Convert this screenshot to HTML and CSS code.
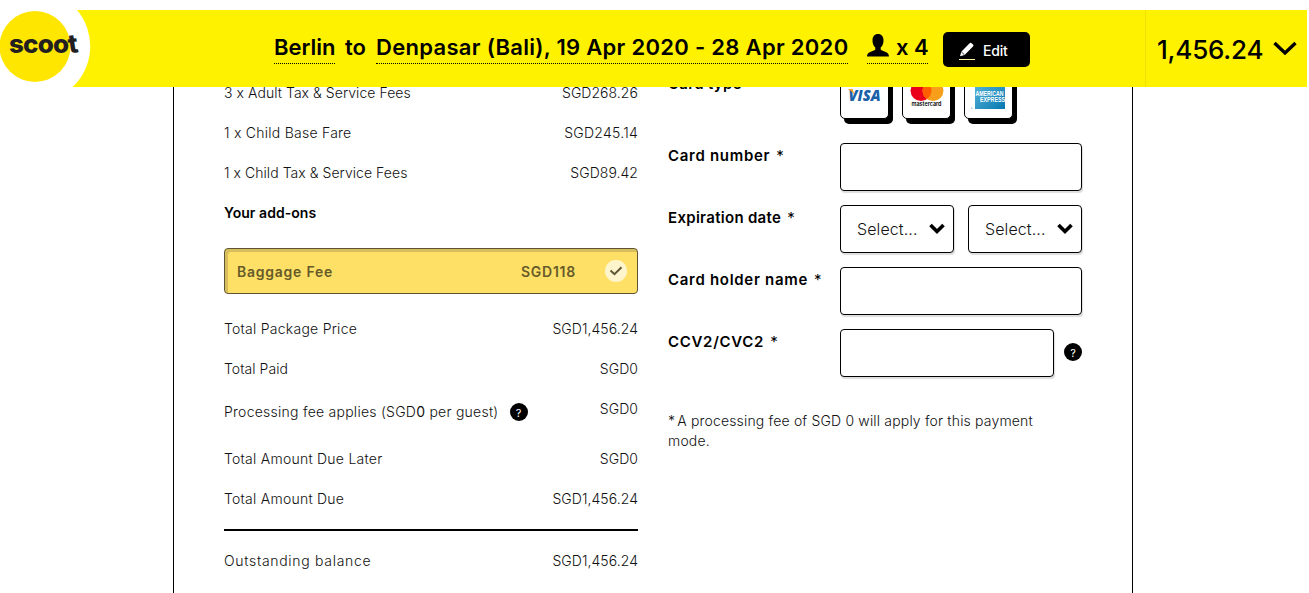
FILE: index.html
```html
<!DOCTYPE html>
<html lang="en">
<head>
  <meta charset="UTF-8">
  <meta name="viewport" content="width=device-width, initial-scale=1.0">
  <title>Scoot - Payment</title>
  <link rel="stylesheet" href="styles.css">
</head>
<body>
  <header class="topbar">
    <a class="logo" href="#">
      <svg width="92" height="77" viewBox="0 0 92 77">
        <path d="M0 0H77A56 56 0 0 1 72.500 77H0Z" fill="#fff"/>
        <circle cx="35" cy="36.500" r="35.500" fill="#ffe600"/>
      </svg>
      <span class="logo-text">scoo<i>t</i></span>
    </a>
    <div class="trip">
      <span class="trip-link from">Berlin</span>
      <span class="to">to</span>
      <span class="trip-link dest">Denpasar (Bali), 19 Apr 2020 - 28 Apr 2020</span>
      <span class="trip-link guests">
        <svg width="22" height="23" viewBox="0 0 22 23"><path d="M11 0C7.500 0 5.500 2.500 5.500 6.500C5.500 9.500 6.500 12 8.300 13.500V15.500C6.500 17.500 0 17.500 0 22.500H22C22 17.500 15.500 17.500 13.700 15.500V13.500C15.500 12 16.500 9.500 16.500 6.500C16.500 2.500 14.500 0 11 0Z"/></svg>
        x 4
      </span>
      <button class="edit">
        <svg width="16" height="18" viewBox="0 0 16 18">
          <path d="M1 14.200L2.300 9.800L10.600 1.200Q11.600 .2 12.600 1.200L14 2.600Q15 3.600 14 4.600L5.600 13L1 14.200Z" fill="#fff"/>
          <path d="M2.300 9.800L5.600 13" stroke="#000" stroke-width=".8"/>
          <path d="M0 17.500H16" stroke="#fff799"/>
        </svg>
        <span>Edit</span>
      </button>
    </div>
    <div class="total">
      <span>1,456.24</span>
      <svg width="24" height="16" viewBox="0 0 24 16"><path d="M1.500 2L12 12L22.500 2" fill="none" stroke="#000" stroke-width="3.400"/></svg>
    </div>
  </header>

  <main class="page">
    <section class="summary">
      <div class="row"><span>3 x Adult Tax &amp; Service Fees</span><span>SGD268.26</span></div>
      <div class="row"><span class="wide">1 x Child Base Fare</span><span class="wide">SGD245.14</span></div>
      <div class="row"><span>1 x Child Tax &amp; Service Fees</span><span>SGD89.42</span></div>
      <div class="row addons"><span>Your add-ons</span></div>
      <div class="baggage">
        <span class="name">Baggage Fee</span>
        <span class="price">SGD118</span>
        <svg width="22" height="22" viewBox="0 0 22 22"><circle cx="11" cy="11" r="11" fill="#fff5cc"/><path d="M5.500 10.500L9.500 14.200L16.500 7.300" fill="none" stroke="#5d5535" stroke-width="2"/></svg>
      </div>
      <div class="row"><span class="wide">Total Package Price</span><span>SGD1,456.24</span></div>
      <div class="row"><span>Total Paid</span><span>SGD0</span></div>
      <div class="row fee">
        <span class="fee-label wide">Processing fee applies (SGD<b>0</b> per guest)</span>
        <span class="help">?</span>
        <span class="amount">SGD0</span>
      </div>
      <div class="row"><span class="wide">Total Amount Due Later</span><span>SGD0</span></div>
      <div class="row"><span class="wide">Total Amount Due</span><span>SGD1,456.24</span></div>
      <div class="row balance"><span class="wider">Outstanding balance</span><span>SGD1,456.24</span></div>
    </section>

    <section class="payment">
      <div class="field types">
        <label>Card type</label>
        <div class="cards">
          <div class="card">
            <svg width="46" height="46" viewBox="0 0 46 46">
              <text x="23.500" y="28.500" class="visa" text-anchor="middle" textLength="32" lengthAdjust="spacingAndGlyphs">VISA</text>
              <path d="M6.500 17H11.500L13.500 23Q10 18 6.500 17Z" fill="#f2a01e"/>
            </svg>
          </div>
          <div class="card">
            <svg width="46" height="46" viewBox="0 0 46 46">
              <circle cx="18" cy="18.500" r="10.500" fill="#eb001b"/>
              <circle cx="30" cy="18.500" r="10.500" fill="#f79e1b"/>
              <path d="M24 9.900A10.500 10.500 0 0 1 24 27.100A10.500 10.500 0 0 1 24 9.900Z" fill="#ff5f00"/>
              <text x="23.500" y="34" class="mc" text-anchor="middle" textLength="30" lengthAdjust="spacingAndGlyphs">mastercard</text>
            </svg>
          </div>
          <div class="card">
            <svg width="46" height="46" viewBox="0 0 46 46">
              <defs><linearGradient id="amex" x1="0" x2="1" y1="0" y2="1"><stop offset="0" stop-color="#5cb8dc"/><stop offset="1" stop-color="#0878b0"/></linearGradient></defs>
              <rect x="10" y="7" width="30" height="30" fill="url(#amex)"/>
              <text x="10.500" y="23.500" class="ax" textLength="28" lengthAdjust="spacingAndGlyphs">AMERICAN</text>
              <text x="15" y="29.500" class="ax" textLength="25" lengthAdjust="spacingAndGlyphs">EXPRESS</text>
              <rect x="6" y="35.500" width="1.500" height="1.500" fill="#9ccbe0"/>
            </svg>
          </div>
        </div>
      </div>
      <div class="field">
        <label class="wider">Card number<i>*</i></label>
        <input class="input" type="text">
      </div>
      <div class="field">
        <label>Expiration date<i>*</i></label>
        <div class="selects">
          <div class="select"><span>Select...</span><svg width="16" height="12" viewBox="0 0 16 12"><path d="M1.500 2L8 8.500L14.500 2" fill="none" stroke="#000" stroke-width="3.600"/></svg></div>
          <div class="select"><span>Select...</span><svg width="16" height="12" viewBox="0 0 16 12"><path d="M1.500 2L8 8.500L14.500 2" fill="none" stroke="#000" stroke-width="3.600"/></svg></div>
        </div>
      </div>
      <div class="field">
        <label class="wider">Card holder name<i>*</i></label>
        <input class="input" type="text">
      </div>
      <div class="field">
        <label class="wider">CCV2/CVC2<i>*</i></label>
        <input class="input cvc" type="text">
        <span class="help">?</span>
      </div>
      <p class="note"><i>*</i>A processing fee of SGD 0 will apply for this payment<br>mode.</p>
    </section>
  </main>
</body>
</html>
```

FILE: styles.css
```css
* {
  box-sizing: border-box;
}
body {
  margin: 0;
  overflow: hidden;
  background: #fff;
  color: #111;
  font-family: "Inter", "Liberation Sans", sans-serif;
  font-size: 14px;
  font-weight: 300;
}
i {
  font-style: normal;
}

/* sticky trip bar */
.topbar {
  position: fixed;
  top: 10px;
  left: 0;
  width: 1307px;
  height: 77px;
  display: flex;
  justify-content: space-between;
  background: #fff200;
  color: #000;
  z-index: 2;
}
.logo {
  position: relative;
  width: 274px;
  color: #231f20;
  text-decoration: none;
}
.logo-text {
  position: absolute;
  left: 9px;
  top: 20px;
  font-family: "Inter", sans-serif;
  font-size: 26px;
  line-height: 28px;
  font-weight: 800;
  letter-spacing: -0.8px;
}
.logo-text i {
  display: inline-block;
  transform: rotate(-8deg);
}
.trip {
  flex: 1;
  display: flex;
  align-items: flex-start;
  padding-top: 22px;
  font-size: 22px;
  line-height: 31px;
  font-weight: 600;
}
.trip-link {
  height: 32px;
  border-bottom: 1px dotted #000;
  white-space: nowrap;
}
.from {
  width: 61px;
}
.to {
  width: 41px;
  padding-left: 10px;
}
.dest {
  width: 472px;
  margin-right: 19px;
  letter-spacing: 0.3px;
}
.guests {
  display: flex;
  gap: 7px;
  width: 61px;
}
.guests svg {
  margin-top: 2px;
  flex: none;
}
.edit {
  display: flex;
  align-items: center;
  gap: 8px;
  width: 87px;
  height: 35px;
  margin-left: 15px;
  padding: 2px 0 0 16px;
  border: 0;
  border-radius: 5px;
  background: #000;
  color: #fff;
  font: 500 14px "Inter", sans-serif;
  letter-spacing: -0.2px;
}
.total {
  display: flex;
  align-items: center;
  gap: 10px;
  width: 162px;
  padding: 1px 0 0 11px;
  border-left: 1px solid #eee000;
  font-size: 26px;
  font-weight: 500;
  letter-spacing: -0.2px;
}

/* two column body */
.page {
  display: flex;
  gap: 30px;
  width: 960px;
  height: 533px;
  margin: 60px 0 0 173px;
  padding: 13px 50px 0;
  border: solid #000;
  border-width: 0 1px;
}
.summary,
.payment {
  width: 414px;
}
.row {
  display: flex;
  justify-content: space-between;
  align-items: center;
  height: 40px;
  padding-bottom: 2px;
  letter-spacing: 0.05px;
}
.wide {
  letter-spacing: 0.25px;
}
.addons {
  font-weight: 600;
  color: #000;
}
.baggage {
  display: flex;
  align-items: center;
  height: 46px;
  margin: 15px 0;
  padding: 0 10px 0 12px;
  border: 1px solid #5d5535;
  border-radius: 4px;
  background: #ffe066;
  box-shadow: inset 3px 3px 0 #d6be5c;
  color: #665a29;
  font-weight: 600;
  letter-spacing: 0.75px;
}
.baggage .name {
  flex: 1;
}
.baggage .price {
  margin-right: 29px;
}
.fee {
  height: 50px;
  align-items: flex-start;
  line-height: 40px;
}
.fee-label {
  margin-top: 3px;
}
.fee .amount {
  margin-left: auto;
}
.help {
  width: 18px;
  height: 18px;
  border-radius: 50%;
  background: #000;
  color: #fff;
  font-size: 11px;
  line-height: 20px;
  text-align: center;
  font-weight: 400;
}
.fee .help {
  margin: 14px 0 0 11px;
}
.balance {
  height: 62px;
  margin-top: 10px;
  border-top: 2px solid #000;
}

.field {
  display: flex;
  height: 62px;
}
.types {
  height: 72px;
  margin-top: -2px;
}
.field label {
  width: 172px;
  padding-top: 3px;
  color: #000;
  font-size: 15px;
  line-height: 20px;
  font-weight: 600;
  letter-spacing: 0.3px;
}
.field label i {
  margin-left: 6px;
  font-weight: 400;
}
.wider,
.field label.wider {
  letter-spacing: 0.7px;
}
.cards {
  display: flex;
  gap: 14px;
}
.card {
  width: 49px;
  height: 48px;
  margin-right: -1px;
  border: 1px solid #000;
  border-radius: 5px;
  background: #fff;
  box-shadow: 4px 5px 0 #000;
}
.card svg {
  display: block;
}
.visa {
  font: italic 800 16px "Open Sans", sans-serif;
  fill: #1a61a9;
}
.mc {
  font: 600 6px "Inter", sans-serif;
}
.ax {
  font: 700 6.500px "Liberation Sans", sans-serif;
  fill: #fff;
}
.input,
.select {
  height: 48px;
  border: 1px solid #000;
  border-radius: 4px;
  background: #fff;
  box-shadow: 1px 2px 1px #ddd;
}
.input {
  width: 242px;
}
.selects {
  display: flex;
  gap: 14px;
}
.select {
  display: flex;
  align-items: center;
  justify-content: space-between;
  width: 114px;
  padding: 0 8px 0 16px;
  font-size: 16px;
  letter-spacing: 0.1px;
}
.input.cvc {
  width: 214px;
  margin-right: 10px;
}
.field .help {
  margin-top: 14px;
}
.note {
  margin: 20px 0 0;
  line-height: 20px;
  letter-spacing: 0.17px;
}
.note i {
  margin-right: 2px;
}
```
